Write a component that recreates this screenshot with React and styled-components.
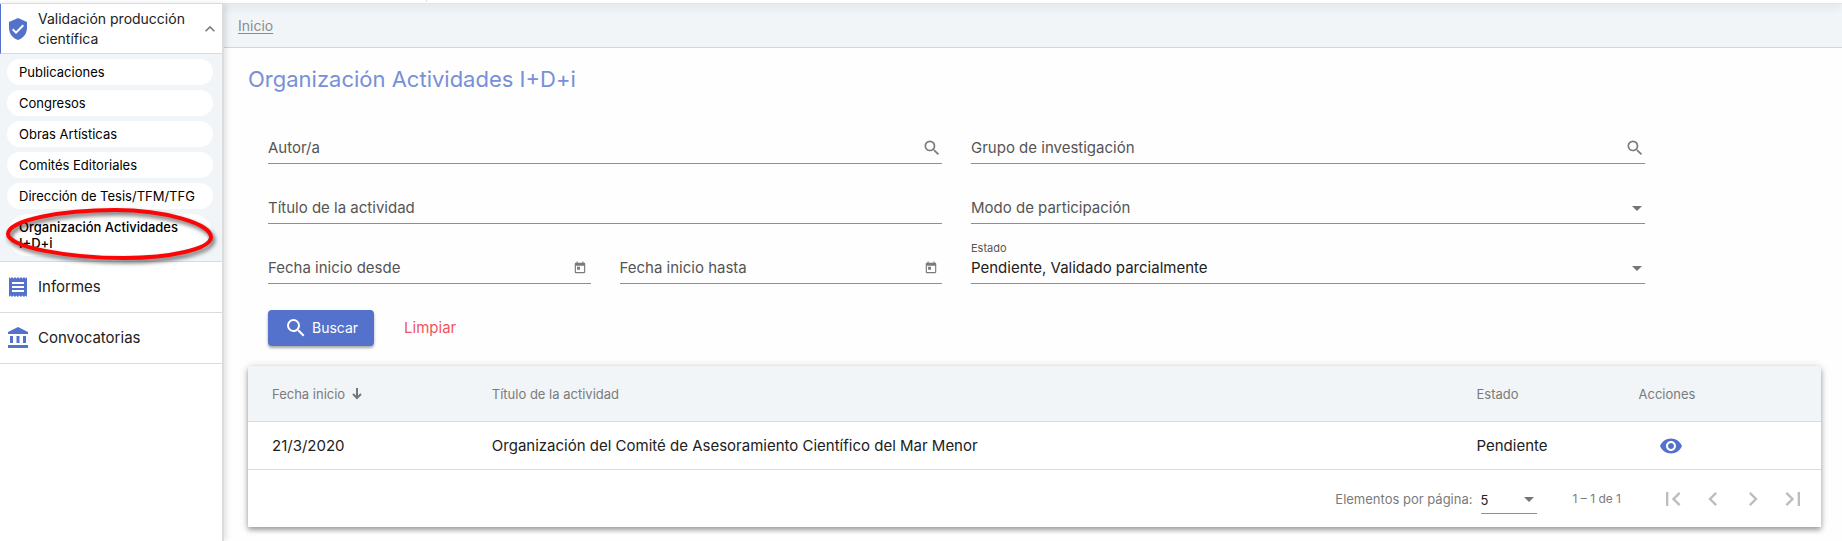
import React from "react";
import styled, { createGlobalStyle, css } from "styled-components";
import {
  MdAccountBalance,
  MdChevronLeft,
  MdChevronRight,
  MdExpandLess,
  MdFirstPage,
  MdLastPage,
  MdReceipt,
  MdSearch,
  MdToday,
  MdVerifiedUser,
  MdVisibility,
} from "react-icons/md";

const color = {
  primary: "#5472cb",
  title: "#7790d8",
  surface: "#f1f5f8",
  line: "#d9dcdf",
  text: "#212121",
  label: "#555555",
  muted: "#7b7b7b",
  underline: "#8f8f8f",
  danger: "#f2545b",
  disabled: "#bdbdbd",
};

const GlobalStyle = createGlobalStyle`
  *, *::before, *::after { box-sizing: border-box; }
  body {
    margin: 0;
    background: #fefefe;
    color: ${color.text};
    font-family: Inter, "Open Sans", sans-serif;
    font-size: 15px;
    line-height: 20px;
  }
  button, input, select { font: inherit; color: inherit; }
  button { cursor: pointer; }
`;

const Page = styled.div`
  min-height: 100vh;
  display: flex;
  flex-direction: column;
`;

const TopBar = styled.header`
  height: 4px;
  padding-left: 426px;
  background: #fff;
  border-bottom: 1px solid #e6e6ea;
  box-shadow: 0 2px 8px rgba(60, 40, 50, 0.14);
  position: relative;
  z-index: 1;
  &::before {
    content: "";
    display: block;
    width: 1px;
    height: 2px;
    background: #dddde2;
  }
`;

const Body = styled.div`
  flex: 1;
  display: flex;
`;

const Sidebar = styled.nav`
  position: relative;
  z-index: 2;
  flex: 0 0 224px;
  background: #fff;
  border-right: 2px solid #dcdcdc;
  box-shadow: 2px 0 6px rgba(0, 0, 0, 0.12);
`;

const sectionRow = css`
  display: flex;
  align-items: center;
  gap: 8px;
  width: 100%;
  min-height: 51px;
  border: 0;
  border-bottom: 1px solid ${color.line};
  background: #fff;
  text-align: left;
  svg { flex: none; color: ${color.primary}; }
`;

const SectionToggle = styled.button`
  ${sectionRow}
  min-height: 50px;
  padding: 0 2px 0 5px;
  border-left: 1px solid ${color.primary};
  font-size: 14px;
  span { flex: 1; }
  svg:last-child { color: ${color.muted}; }
`;

const SectionLink = styled.a`
  ${sectionRow}
  padding: 0 6px;
  color: ${color.text};
  text-decoration: none;
`;

const SubMenu = styled.ul`
  position: relative;
  list-style: none;
  margin: 0;
  padding: 5px 9px 5px 7px;
  display: flex;
  flex-direction: column;
  gap: 5px;
  background: ${color.surface};
  border-bottom: 1px solid ${color.line};
`;

const SubLink = styled.a`
  display: block;
  padding: 5px 12px;
  border-radius: 21px;
  background: #fff;
  color: #000;
  font-size: 13px;
  line-height: 16px;
  font-weight: ${(p) => (p["aria-current"] ? 500 : 400)};
  text-decoration: none;
`;

const Highlight = styled.svg`
  position: absolute;
  left: 0;
  bottom: -5px;
  width: 222px;
  height: 62px;
  pointer-events: none;
  filter: drop-shadow(2px 3px 2px rgba(0, 0, 0, 0.6));
`;

const Main = styled.main`
  flex: 1;
  min-width: 0;
`;

const Breadcrumb = styled.nav`
  height: 44px;
  padding: 12px 14px;
  background: ${color.surface};
  border-bottom: 1px solid #d0d6da;
  font-size: 14px;
  a { color: #8c8c8c; text-underline-offset: 2px; }
`;

const Content = styled.div`
  padding: 18px 21px 14px 24px;
`;

const Title = styled.h1`
  margin: 0 0 28px;
  color: ${color.title};
  font-size: 22px;
  line-height: 26px;
  font-weight: 400;
`;

const SearchForm = styled.form`
  margin: 0 176px 0 20px;
  display: grid;
  grid-template-columns: repeat(2, minmax(0, 1fr));
  gap: 16px 29px;
`;

const DatePair = styled.div`
  display: grid;
  grid-template-columns: repeat(2, minmax(0, 1fr));
  gap: 29px;
`;

const FieldBox = styled.div`
  display: grid;
  grid-template: 15px 26px / minmax(0, 1fr) auto;
  align-items: center;
  padding-bottom: 2px;
  border-bottom: 1px solid ${color.underline};
  color: ${color.muted};

  label {
    grid-area: ${(p) => (p.$floating ? "1 / 1" : "2 / 1")};
    font-size: ${(p) => (p.$floating ? "11px" : "15px")};
    line-height: 16px;
    color: ${color.label};
    pointer-events: none;
    z-index: 1;
  }
`;

const control = css`
  grid-area: 2 / 1;
  width: 100%;
  height: 26px;
  padding: 0;
  border: 0;
  outline: 0;
  background: transparent;
  color: ${color.text};
`;

const TextInput = styled.input`
  ${control}
`;

const Select = styled.select`
  ${control}
  grid-column: 1 / 3;
  appearance: none;
`;

const Suffix = styled.button`
  grid-area: 2 / 2;
  display: flex;
  padding: 0;
  margin-right: ${(p) => p.$inset || 0}px;
  border: 0;
  background: none;
  color: inherit;
`;

const Caret = styled.span`
  grid-area: 2 / 2;
  margin-right: 3px;
  border: 5px solid transparent;
  border-top-color: #757575;
  border-bottom: 0;
  pointer-events: none;
`;

const Actions = styled.div`
  display: flex;
  gap: 14px;
  margin: 26px 0 20px 20px;
`;

const Button = styled.button`
  display: flex;
  align-items: center;
  gap: 4px;
  height: 36px;
  padding: 0 16px;
  border: 0;
  border-radius: 4px;
  background: ${(p) => (p.$primary ? color.primary : "transparent")};
  color: ${(p) => (p.$primary ? "#fff" : color.danger)};
  font-size: ${(p) => (p.$primary ? 14 : 15)}px;
  box-shadow: ${(p) => (p.$primary ? "0 2px 3px rgba(0, 0, 0, 0.35)" : "none")};
`;

const Card = styled.section`
  background: #fff;
  border-radius: 4px 4px 0 0;
  box-shadow: 0 3px 5px rgba(0, 0, 0, 0.3), 0 1px 8px rgba(0, 0, 0, 0.18);
`;

const Table = styled.table`
  width: 100%;
  border-collapse: separate;
  border-spacing: 0;
  table-layout: fixed;
  th, td {
    padding: 0;
    text-align: left;
    border-bottom: 1px solid ${color.line};
  }
  th:first-child, td:first-child { padding-left: 24px; }
  th {
    height: 56px;
    background: ${color.surface};
    color: ${color.muted};
    font-size: 13px;
    font-weight: 400;
  }
  th:first-child { border-top-left-radius: 4px; }
  th:last-child { border-top-right-radius: 4px; }
  td { height: 48px; }
`;

const Col = styled.col`
  width: ${(p) => p.$w};
`;

const SortButton = styled.button`
  display: flex;
  align-items: center;
  gap: 7px;
  padding: 0;
  border: 0;
  background: none;
`;

const IconButton = styled.button`
  display: flex;
  align-items: center;
  justify-content: center;
  width: ${(p) => p.$size}px;
  height: ${(p) => p.$size}px;
  margin-left: ${(p) => (p.$action ? 14 : 0)}px;
  padding: 0;
  border: 0;
  background: none;
  color: ${(p) => (p.$action ? color.primary : color.disabled)};
`;

const Paginator = styled.footer`
  display: flex;
  justify-content: flex-end;
  align-items: center;
  height: 57px;
  padding-right: 8px;
  color: ${color.muted};
  font-size: 13px;
`;

const PageSize = styled.div`
  display: grid;
  grid-template-columns: 1fr auto;
  align-items: center;
  width: 56px;
  height: 28px;
  margin: 3px 36px 0 8px;
  border-bottom: 1px solid ${color.underline};
  select { grid-area: 1 / 1 / 2 / 3; }
  span { grid-area: 1 / 2; }
`;

const PageRange = styled.span`
  margin-right: 32px;
  font-size: 12px;
`;

function Field({ id, label, type = "text", options, value, Icon, iconSize, inset }) {
  return (
    <FieldBox $floating={Boolean(value)}>
      <label htmlFor={id}>{label}</label>
      {options ? (
        <>
          <Select id={id} defaultValue={value || ""}>
            {options.map((o) => (
              <option key={o} value={o}>{o}</option>
            ))}
          </Select>
          <Caret />
        </>
      ) : (
        <TextInput id={id} type={type} />
      )}
      {Icon && (
        <Suffix type="button" aria-label={label} $inset={inset}>
          <Icon size={iconSize} />
        </Suffix>
      )}
    </FieldBox>
  );
}

const subItems = [
  "Publicaciones",
  "Congresos",
  "Obras Artísticas",
  "Comités Editoriales",
  "Dirección de Tesis/TFM/TFG",
  "Organización Actividades I+D+i",
];

const pagerButtons = [
  ["Primera página", MdFirstPage],
  ["Página anterior", MdChevronLeft],
  ["Página siguiente", MdChevronRight],
  ["Última página", MdLastPage],
];

export default function App() {
  return (
    <Page>
      <GlobalStyle />
      <TopBar />
      <Body>
        <Sidebar aria-label="Menú">
          <SectionToggle type="button" aria-expanded="true">
            <MdVerifiedUser size={24} />
            <span>Validación producción científica</span>
            <MdExpandLess size={20} />
          </SectionToggle>
          <SubMenu>
            {subItems.map((item, i) => (
              <li key={item}>
                <SubLink href="#" aria-current={i === subItems.length - 1 ? "page" : undefined}>
                  {item}
                </SubLink>
              </li>
            ))}
            <Highlight viewBox="0 0 222 62" fill="none" aria-hidden="true">
              <path
                d="M115 6C166 6 211 20 211 33C211 45 170 54 124 54C68 54 8 43 8 30C8 16 62 6 115 6Z"
                stroke="#fb0606"
                strokeWidth="4"
              />
            </Highlight>
          </SubMenu>
          <SectionLink href="#">
            <MdReceipt size={24} />
            Informes
          </SectionLink>
          <SectionLink href="#">
            <MdAccountBalance size={24} />
            Convocatorias
          </SectionLink>
        </Sidebar>

        <Main>
          <Breadcrumb aria-label="Ruta">
            <a href="#">Inicio</a>
          </Breadcrumb>
          <Content>
            <Title>Organización Actividades I+D+i</Title>
            <SearchForm id="busqueda">
              <Field id="autor" label="Autor/a" Icon={MdSearch} iconSize={20} />
              <Field id="grupo" label="Grupo de investigación" Icon={MdSearch} iconSize={20} />
              <Field id="titulo" label="Título de la actividad" />
              <Field id="modo" label="Modo de participación" options={[""]} />
              <DatePair>
                <Field id="desde" label="Fecha inicio desde" Icon={MdToday} iconSize={14} inset={4} />
                <Field id="hasta" label="Fecha inicio hasta" Icon={MdToday} iconSize={14} inset={4} />
              </DatePair>
              <Field
                id="estado"
                label="Estado"
                value="Pendiente, Validado parcialmente"
                options={["Pendiente, Validado parcialmente"]}
              />
            </SearchForm>
            <Actions>
              <Button type="button" $primary>
                <MdSearch size={24} />
                Buscar
              </Button>
              <Button type="reset" form="busqueda">Limpiar</Button>
            </Actions>

            <Card>
              <Table>
                <colgroup>
                  <Col $w="15.5%" />
                  <Col $w="62.6%" />
                  <Col $w="10.3%" />
                  <Col $w="11.6%" />
                </colgroup>
                <thead>
                  <tr>
                    <th scope="col" aria-sort="descending">
                      <SortButton type="button">
                        Fecha inicio
                        <svg width="10" height="12" viewBox="0 0 10 12" fill="none" stroke="#757575" strokeWidth="2" aria-hidden="true">
                          <path d="M5 0v10M1 6l4 4 4-4" />
                        </svg>
                      </SortButton>
                    </th>
                    <th scope="col">Título de la actividad</th>
                    <th scope="col">Estado</th>
                    <th scope="col">Acciones</th>
                  </tr>
                </thead>
                <tbody>
                  <tr>
                    <td>21/3/2020</td>
                    <td>Organización del Comité de Asesoramiento Científico del Mar Menor</td>
                    <td>Pendiente</td>
                    <td>
                      <IconButton type="button" aria-label="Ver" $size={36} $action>
                        <MdVisibility size={24} />
                      </IconButton>
                    </td>
                  </tr>
                </tbody>
              </Table>
              <Paginator>
                <label htmlFor="page-size">Elementos por página:</label>
                <PageSize>
                  <Select id="page-size" defaultValue="5">
                    <option>5</option>
                  </Select>
                  <Caret />
                </PageSize>
                <PageRange>1 – 1 de 1</PageRange>
                {pagerButtons.map(([label, Icon]) => (
                  <IconButton key={label} type="button" aria-label={label} $size={40}>
                    <Icon size={28} />
                  </IconButton>
                ))}
              </Paginator>
            </Card>
          </Content>
        </Main>
      </Body>
    </Page>
  );
}
